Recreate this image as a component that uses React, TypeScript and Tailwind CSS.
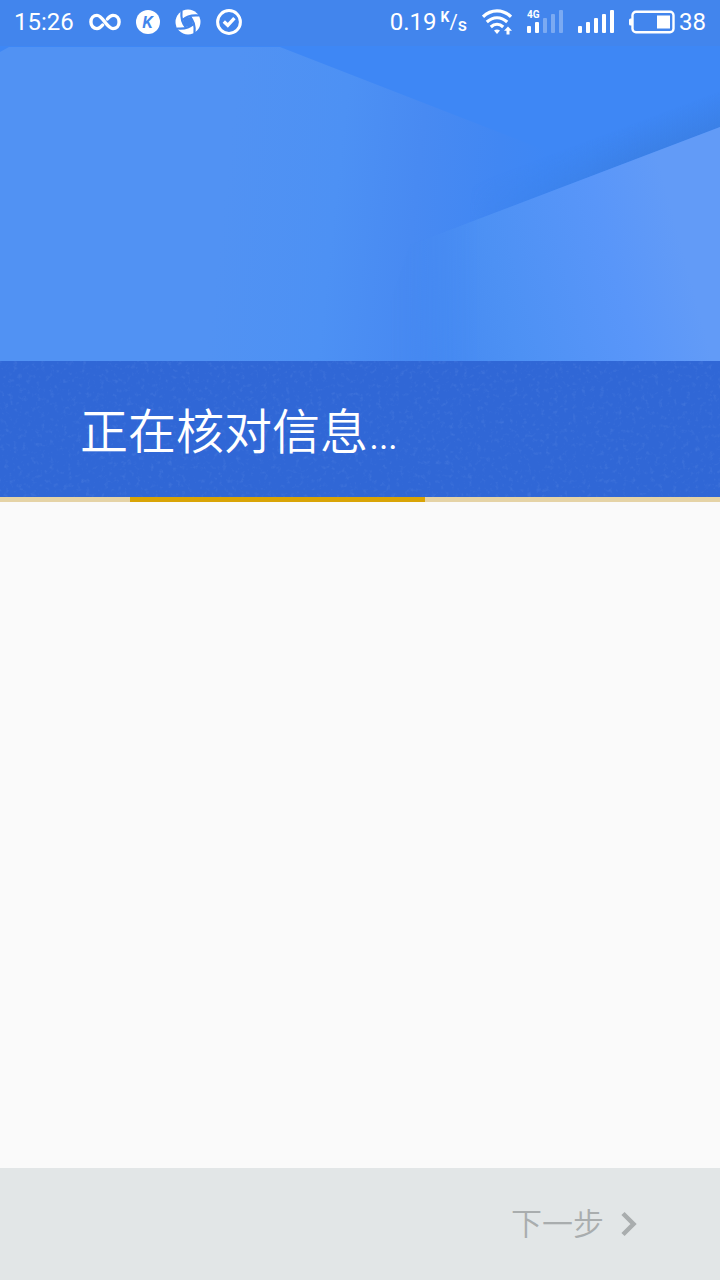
import React from 'react';

const InfinityIcon: React.FC = () => (
  <svg viewBox="0 0 32 20" className="h-5 w-8" fill="none" stroke="white" strokeWidth="3.4" strokeLinecap="round" aria-hidden="true">
    <path d="M13.600 13C11.800 15.200 10.200 16.600 8 16.600C4.600 16.600 1.900 13.800 1.900 10C1.900 6.200 4.600 3.400 8 3.400C14 3.400 17.500 16.600 24 16.600C27.400 16.600 30.100 13.800 30.100 10C30.100 6.200 27.400 3.400 24 3.400C21.800 3.400 20.200 4.900 18.400 7" />
  </svg>
);

const KIcon: React.FC = () => (
  <svg viewBox="0 0 24 24" className="h-6 w-6" aria-hidden="true">
    <circle cx="12" cy="12" r="12" fill="white" />
    <text x="11.600" y="18" textAnchor="middle" fontSize="17" className="fill-[#4285ec] font-semibold italic">K</text>
  </svg>
);

// four blades turning round an open centre
const SwirlIcon: React.FC = () => (
  <svg viewBox="0 0 26 26" className="h-[26px] w-[26px]" aria-hidden="true">
    <circle cx="13" cy="13" r="12.500" fill="white" />
    <path d="M13 7.500Q14 12 18.500 13Q14 14 13 18.500Q12 14 7.500 13Q12 12 13 7.500Z" fill="#4285ec" />
    <path d="M8 9L17 8L18 17L9 18Z" fill="#4285ec" />
    <g fill="none" stroke="#4285ec" strokeWidth="2.200">
      <path d="M8 11Q13 5.500 24 6.500" />
      <path d="M8 11Q13 5.500 24 6.500" transform="rotate(90 13 13)" />
      <path d="M8 11Q13 5.500 24 6.500" transform="rotate(180 13 13)" />
      <path d="M8 11Q13 5.500 24 6.500" transform="rotate(270 13 13)" />
    </g>
  </svg>
);

const CheckIcon: React.FC = () => (
  <svg viewBox="0 0 26 26" className="h-[26px] w-[26px]" fill="none" stroke="white" aria-hidden="true">
    <circle cx="13" cy="13" r="11.400" strokeWidth="3" />
    <path d="M7.800 12.600L11.800 16.300L18.400 9.200" strokeWidth="3.400" />
  </svg>
);

const WifiIcon: React.FC = () => (
  <svg viewBox="0 0 30 26" className="h-[26px] w-[30px]" fill="none" stroke="white" strokeWidth="3.200" aria-hidden="true">
    <path d="M1 7.800C9-.2 21-.2 29 7.800" />
    <path d="M4.800 13C11 7.300 19 7.300 25.200 13" />
    <path d="M8.800 18C12.500 14.600 17.500 14.600 21.200 18" />
    <path d="M12 21.500Q15 19.300 18 21.500L15 25Z" fill="white" stroke="none" />
    <path d="M26 17.500L30 21.800H27.500V25.500H24.500V21.800H22Z" fill="white" stroke="none" />
  </svg>
);

const MobileIcon: React.FC = () => (
  <svg viewBox="0 0 36 26" className="h-[26px] w-9" fill="white" aria-hidden="true">
    <text x="0" y="9" fontSize="10" className="font-bold">4G</text>
    <rect x="0" y="17" width="4" height="7" rx="1" />
    <rect x="8" y="13" width="4" height="11" rx="1" />
    <g opacity="0.3">
      <rect x="16" y="9" width="4" height="15" rx="1" />
      <rect x="24" y="5" width="4" height="19" rx="1" />
      <rect x="32" y="1" width="4" height="23" rx="1" />
    </g>
  </svg>
);

const SignalIcon: React.FC = () => (
  <svg viewBox="0 0 36 26" className="h-[26px] w-9" fill="white" aria-hidden="true">
    <rect x="0" y="17" width="4" height="7" rx="1" />
    <rect x="8" y="13" width="4" height="11" rx="1" />
    <rect x="16" y="9" width="4" height="15" rx="1" />
    <rect x="24" y="5" width="4" height="19" rx="1" />
    <rect x="32" y="1" width="4" height="23" rx="1" />
  </svg>
);

const BatteryIcon: React.FC = () => (
  <svg viewBox="0 0 46 24" className="h-6 w-[46px]" aria-hidden="true">
    <path d="M3 8.500H1.500Q0 8.500 0 10V14Q0 15.500 1.500 15.500H3Z" fill="white" />
    <rect x="3.500" y="1.800" width="41" height="20.500" rx="3.500" fill="none" stroke="white" strokeWidth="2.400" />
    <rect x="28" y="5.500" width="13" height="13" fill="white" />
  </svg>
);

const StatusBar: React.FC = () => (
  <div className="flex h-[46px] items-center justify-between bg-[#4285ed] px-[14px] pb-[2px] text-2xl leading-none text-white">
    <div className="flex items-center gap-[15px]">
      <span>15:26</span>
      <InfinityIcon />
      <KIcon />
      <SwirlIcon />
      <CheckIcon />
    </div>
    <div className="flex items-center gap-[15px]">
      <div className="flex items-center gap-1">
        <span>0.19</span>
        <span className="flex h-6 items-stretch">
          <span className="text-sm font-bold leading-none">K</span>
          <span className="text-xl leading-6">/</span>
          <span className="self-end text-lg font-medium leading-none">s</span>
        </span>
      </div>
      <WifiIcon />
      <MobileIcon />
      <SignalIcon />
      <div className="flex items-center gap-1">
        <BatteryIcon />
        <span>38</span>
      </div>
    </div>
  </div>
);

const HeaderArt: React.FC = () => (
  <svg viewBox="0 0 720 315" preserveAspectRatio="none" className="block h-[315px] w-full" aria-hidden="true">
    <defs>
      <linearGradient id="left" gradientUnits="userSpaceOnUse" x1="225" y1="140" x2="540" y2="175">
        <stop offset="0" stopColor="#5192f3" />
        <stop offset="0.35" stopColor="#4d91f4" />
        <stop offset="0.6" stopColor="#488af2" />
        <stop offset="0.85" stopColor="#4187f3" />
        <stop offset="1" stopColor="#3e87f5" />
      </linearGradient>
      <linearGradient id="right" gradientUnits="userSpaceOnUse" x1="400" y1="250" x2="675" y2="175">
        <stop offset="0" stopColor="#4488f0" />
        <stop offset="0.35" stopColor="#4d91f4" />
        <stop offset="0.75" stopColor="#5996f9" />
        <stop offset="1" stopColor="#629bf7" />
      </linearGradient>
      <linearGradient id="fade" gradientUnits="userSpaceOnUse" x1="390" y1="0" x2="480" y2="0">
        <stop offset="0" stopColor="white" stopOpacity="0" />
        <stop offset="1" stopColor="white" />
      </linearGradient>
      <linearGradient id="shade" gradientUnits="userSpaceOnUse" x1="620" y1="119" x2="608" y2="87">
        <stop offset="0" stopColor="#3b80e6" />
        <stop offset="1" stopColor="#3b80e6" stopOpacity="0" />
      </linearGradient>
      <linearGradient id="shadeFade" gradientUnits="userSpaceOnUse" x1="470" y1="0" x2="640" y2="0">
        <stop offset="0" stopColor="white" stopOpacity="0" />
        <stop offset="1" stopColor="white" />
      </linearGradient>
      <mask id="rightMask">
        <rect width="720" height="315" fill="url(#fade)" />
      </mask>
      <mask id="shadeMask">
        <rect width="720" height="315" fill="url(#shadeFade)" />
      </mask>
    </defs>
    <rect width="720" height="315" fill="#3e87f5" />
    <path d="M0 6L9 1H280L550 106V315H0Z" fill="url(#left)" />
    <path d="M410 199L720 81V30L440 150Z" fill="url(#shade)" mask="url(#shadeMask)" />
    <path d="M410 199L720 81V315H370Z" fill="url(#right)" mask="url(#rightMask)" />
  </svg>
);

const TitleBand: React.FC = () => (
  <div className="relative bg-[#3067d6] px-20 pb-7 pt-9">
    <svg className="absolute inset-0 h-full w-full" aria-hidden="true">
      <filter id="grain">
        <feTurbulence type="fractalNoise" baseFrequency="0.22" numOctaves="3" seed="4" />
        <feColorMatrix values="0 0 0 0 0.4  0 0 0 0 0.58  0 0 0 0 0.95  2 0 0 0 -1.1" />
      </filter>
      <rect width="100%" height="100%" filter="url(#grain)" opacity="0.16" />
    </svg>
    <h1 className="relative text-5xl font-[350] leading-[72px] text-white">正在核对信息…</h1>
  </div>
);

const ProgressBar: React.FC = () => (
  <div role="progressbar" aria-label="正在核对信息" className="flex h-[5px] bg-[#e5d3a6]">
    <div className="w-[18%]" />
    <div className="w-[41%] bg-[#d9a406]" />
  </div>
);

export default function App() {
  return (
    <div className="flex min-h-screen flex-col bg-[#fafafa] font-['Roboto','Noto_Sans_CJK_SC',sans-serif]">
      <header>
        <StatusBar />
        <HeaderArt />
        <TitleBand />
        <ProgressBar />
      </header>
      <main className="flex-1" />
      <footer className="flex h-28 items-center justify-end bg-[#e2e6e7] px-20">
        <button type="button" disabled className="flex items-center gap-4 text-[31px] font-[350] leading-none text-[#a9adae]">
          下一步
          <svg viewBox="0 0 20 26" className="h-[26px] w-5" fill="none" stroke="#a9adae" strokeWidth="4.500" aria-hidden="true">
            <path d="M3 2.500L13.500 13L3 23.500" />
          </svg>
        </button>
      </footer>
    </div>
  );
}
